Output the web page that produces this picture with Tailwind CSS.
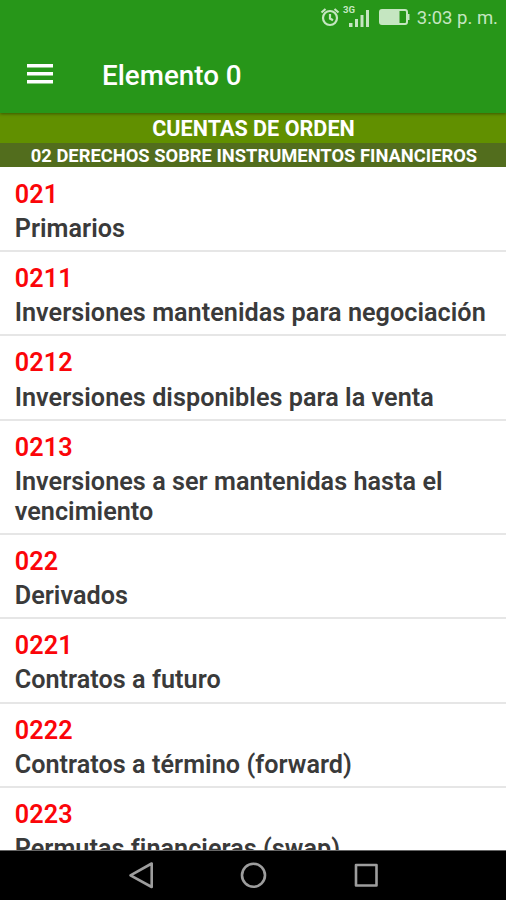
<!DOCTYPE html>
<html lang="es">

<head>
  <meta charset="UTF-8" />
  <meta name="viewport" content="width=device-width, initial-scale=1.0" />
  <title>Elemento 0</title>
  <script src="https://cdn.jsdelivr.net/npm/@tailwindcss/browser@4"></script>
</head>

<body class="h-[900px] w-[506px] overflow-hidden flex flex-col bg-white font-['Roboto',sans-serif]">

  <!-- Barra de estado + barra de la app -->
  <header class="relative z-10 h-[113px] shrink-0 bg-[#279619] shadow-[0_1px_3px_rgba(0,0,0,0.4)]">
    <div class="h-9 flex items-center justify-end pr-2 text-[#c5e6c1]">
      <svg class="w-5 h-5 mr-0.5 -mt-0.5" viewBox="0 0 20 20" fill="none" stroke="currentColor" stroke-width="2.2">
        <circle cx="10" cy="11" r="7" />
        <path d="M10 7v4.500l3 1.700M1.500 5.500l4-3.500M18.500 5.500l-4-3.500" />
      </svg>
      <svg class="w-7 h-6 mr-2 -mt-1" viewBox="0 0 28 24" fill="currentColor">
        <text x="1" y="9" font-size="9.5" font-weight="700" textLength="12" lengthAdjust="spacingAndGlyphs">3G</text>
        <path d="M7 19h3.500v4H7zM13 15h3v8h-3zM18.500 11h3v12h-3zM24 6h3v17h-3z" />
      </svg>
      <svg class="w-8 h-[18px] mr-[7px] -mt-0.5" viewBox="0 0 32 18">
        <rect x="2" y="2" width="27" height="14" rx="2" fill="none" stroke="currentColor" stroke-width="2" />
        <path d="M3 3h18.500v12H3zM29 6h2.500v6H29z" fill="currentColor" />
      </svg>
      <span class="text-[18.5px] leading-9">3:03 p. m.</span>
    </div>
    <div class="h-[77px] flex items-center pl-[27px]">
      <svg class="w-[26px] h-5 -mt-0.5" viewBox="0 0 26 20" fill="#fff">
        <path d="M0 0h26v3.400H0zM0 8h26v3.400H0zM0 16h26v3.400H0z" />
      </svg>
      <h1 class="ml-[49px] mt-[3px] text-[27.8px] font-medium text-white">Elemento 0</h1>
    </div>
  </header>

  <div class="h-[30px] shrink-0 bg-[#619000] text-white text-center text-[21.6px] leading-8 font-bold pl-px">CUENTAS DE ORDEN</div>
  <div class="h-6 shrink-0 bg-[#526d1d] text-white text-center text-[18.35px] leading-[26px] font-bold whitespace-nowrap pl-0.5">02 DERECHOS SOBRE INSTRUMENTOS FINANCIEROS</div>

  <main id="cuentas" class="flex-1 min-h-0 overflow-hidden pt-[0.7px]"></main>

  <!-- Navegación de Android -->
  <nav class="h-[50px] shrink-0 bg-black border-t border-[#666]">
    <svg class="w-full h-[49px]" viewBox="0 851 506 49" fill="none" stroke="#9d9d9d" stroke-width="2.6" stroke-linejoin="round">
      <path d="M130.5 875.3L151.7 863.5V887z" />
      <circle cx="253.5" cy="875.3" r="11.5" />
      <rect x="356" y="865" width="20.5" height="20.5" />
    </svg>
  </nav>

  <script>
    const cuentas = [
      ['021', 'Primarios'],
      ['0211', 'Inversiones mantenidas para negociación'],
      ['0212', 'Inversiones disponibles para la venta'],
      ['0213', 'Inversiones a ser mantenidas hasta el vencimiento'],
      ['022', 'Derivados'],
      ['0221', 'Contratos a futuro'],
      ['0222', 'Contratos a término (forward)'],
      ['0223', 'Permutas financieras (swap)'],
    ];

    document.getElementById('cuentas').innerHTML = cuentas.map(([codigo, nombre]) => `
      <div class="pt-[12px] pb-[6.6px] pl-[14.7px] pr-[10px] border-b-2 border-[#e6e6e6] text-[25.2px] leading-[29.5px] font-semibold">
        <div class="mb-[4.8px] text-[#fb0509] tracking-[0.15px]">${codigo}</div>
        <div class="text-[#3a3a3a] tracking-[0.04px]">${nombre}</div>
      </div>
    `).join('');
  </script>

</body>

</html>
